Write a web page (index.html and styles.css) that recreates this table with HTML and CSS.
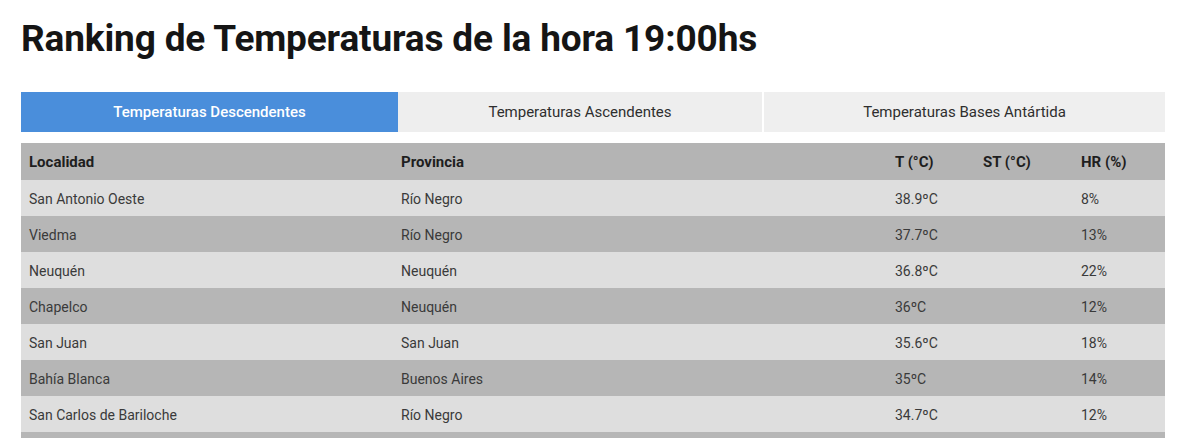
FILE: index.html
```html
<!DOCTYPE html>
<html lang="es">
<head>
<meta charset="utf-8">
<title>Ranking de Temperaturas</title>
<link rel="stylesheet" href="styles.css">
</head>
<body>
<div class="page">
  <h1 class="title">Ranking de Temperaturas de la hora 19:00hs</h1>
  <div class="tabs">
    <div class="tab tab-active tab-1">Temperaturas Descendentes</div>
    <div class="tab tab-2">Temperaturas Ascendentes</div>
    <div class="tab tab-3">Temperaturas Bases Antártida</div>
  </div>
  <table class="ranking">
    <colgroup>
      <col class="c-loc"><col class="c-prov"><col class="c-t"><col class="c-st"><col class="c-hr">
    </colgroup>
    <thead>
      <tr><th>Localidad</th><th>Provincia</th><th>T (°C)</th><th>ST (°C)</th><th>HR (%)</th></tr>
    </thead>
    <tbody>
      <tr><td>San Antonio Oeste</td><td>Río Negro</td><td>38.9ºC</td><td></td><td>8%</td></tr>
      <tr><td>Viedma</td><td>Río Negro</td><td>37.7ºC</td><td></td><td>13%</td></tr>
      <tr><td>Neuquén</td><td>Neuquén</td><td>36.8ºC</td><td></td><td>22%</td></tr>
      <tr><td>Chapelco</td><td>Neuquén</td><td>36ºC</td><td></td><td>12%</td></tr>
      <tr><td>San Juan</td><td>San Juan</td><td>35.6ºC</td><td></td><td>18%</td></tr>
      <tr><td>Bahía Blanca</td><td>Buenos Aires</td><td>35ºC</td><td></td><td>14%</td></tr>
      <tr><td>San Carlos de Bariloche</td><td>Río Negro</td><td>34.7ºC</td><td></td><td>12%</td></tr>
      <tr class="row-next"><td></td><td></td><td></td><td></td><td></td></tr>
    </tbody>
  </table>
</div>
</body>
</html>
```
FILE: styles.css
```css
html, body {
  margin: 0;
  padding: 0;
  background: #ffffff;
  font-family: Roboto, "Liberation Sans", Arial, sans-serif;
  color: #333;
}
.page {
  padding: 0 35px 0 21px;
}
.title {
  margin: 0;
  padding-top: 17px;
  height: 92px;
  box-sizing: border-box;
  font-size: 37px;
  line-height: 44px;
  font-weight: 700;
  color: #151515;
  letter-spacing: -0.15px;
}
.tabs {
  display: flex;
  height: 40px;
}
.tab {
  display: flex;
  align-items: center;
  justify-content: center;
  font-size: 15px;
  color: #2e2e2e;
  background: #eeeeee;
}
.tab-1 { width: 377px; }
.tab-2 { width: 364px; border-right: 2px solid #ffffff; }
.tab-3 { width: 401px; background: #efefef; }
.tab-active {
  background: #4a8edb;
  color: #ffffff;
  font-weight: 500;
}
.ranking {
  margin-top: 11px;
  width: 1144px;
  border-collapse: collapse;
  table-layout: fixed;
  font-size: 14px;
}
.c-loc { width: 372px; }
.c-prov { width: 494px; }
.c-t { width: 88px; }
.c-st { width: 98px; }
.c-hr { width: 92px; }
.ranking th {
  text-align: left;
  font-weight: 700;
  font-size: 15px;
  color: #1e1e1e;
  background: #b4b4b4;
  height: 37px;
  padding: 0 8px;
}
.ranking td {
  height: 35px;
  padding: 1px 8px 0;
  color: #3a3a3a;
}
.ranking tbody tr:nth-child(odd) td { background: #dedede; }
.ranking tbody tr:nth-child(even) td { background: #b6b6b6; }
```
